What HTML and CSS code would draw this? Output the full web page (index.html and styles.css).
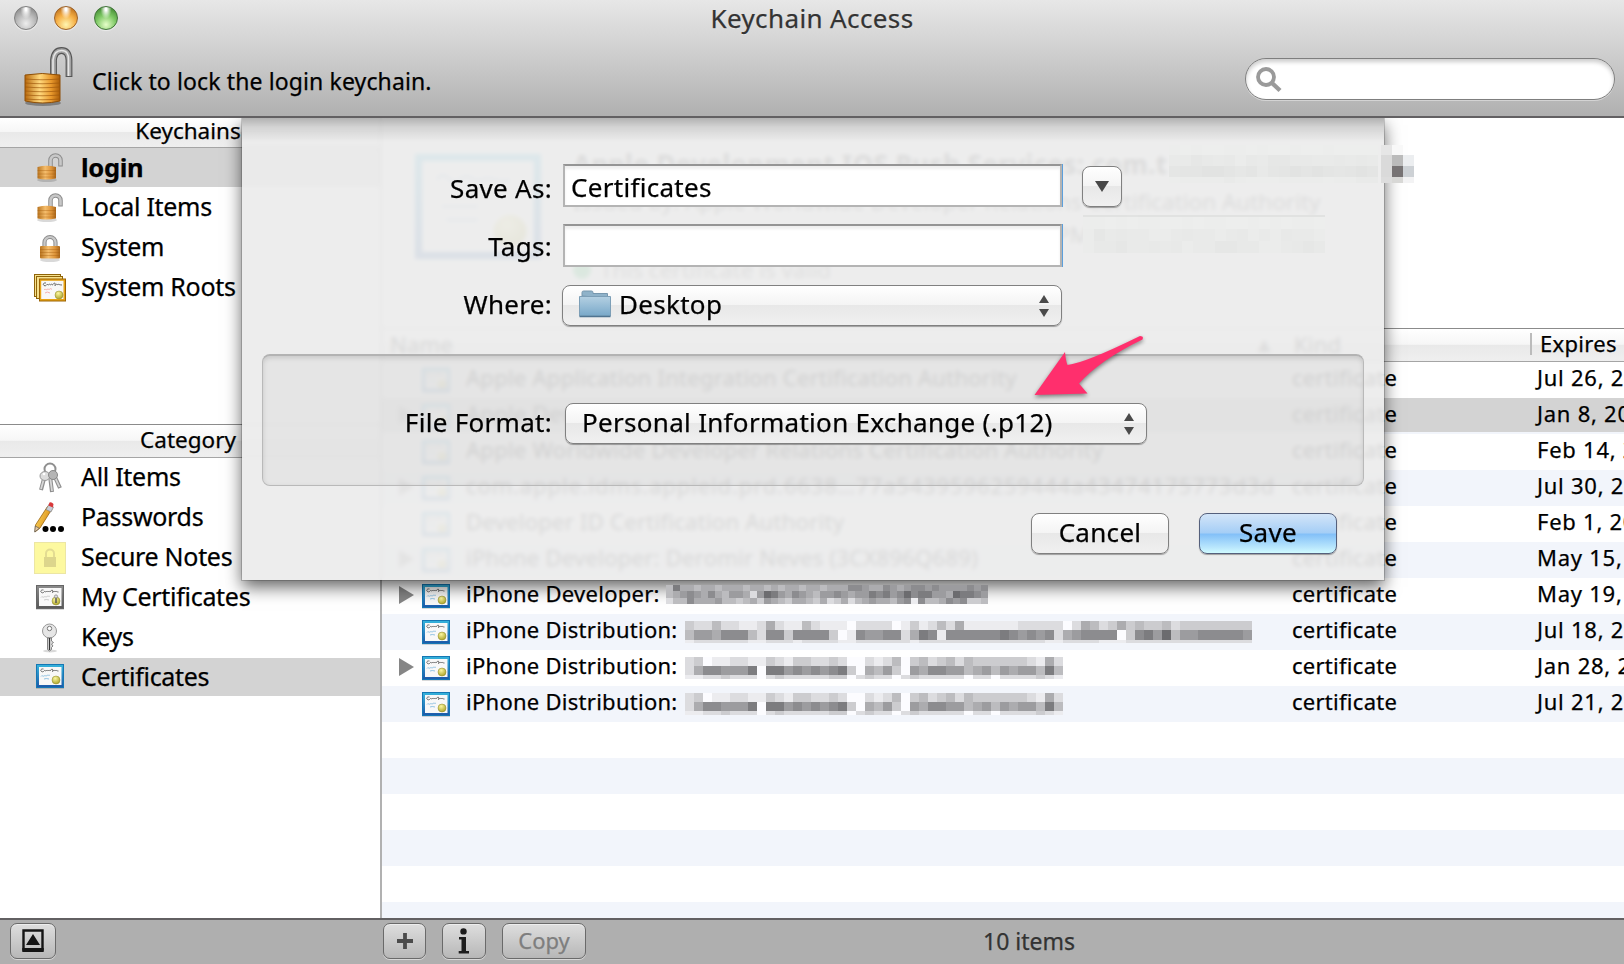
FILE: index.html
```html
<!DOCTYPE html>
<html lang="en">
<head>
<meta charset="utf-8">
<title>Keychain Access</title>
<link rel="stylesheet" href="styles.css">
</head>
<body>
<svg width="0" height="0" class="defs">
  <defs>
    <linearGradient id="blue" x1="0" y1="0" x2="0" y2="1"><stop offset="0" stop-color="#35b4dc"/><stop offset="1" stop-color="#1c58a8"/></linearGradient>
    <linearGradient id="gray" x1="0" y1="0" x2="0" y2="1"><stop offset="0" stop-color="#8c8c8c"/><stop offset="1" stop-color="#585858"/></linearGradient>
    <linearGradient id="brass" x1="0" y1="0" x2="1" y2="0"><stop offset="0" stop-color="#b8680c"/><stop offset=".42" stop-color="#ffd87c"/><stop offset=".75" stop-color="#e8982c"/><stop offset="1" stop-color="#aa5c08"/></linearGradient>
    <linearGradient id="brass2" x1="0" y1="0" x2="1" y2="0"><stop offset="0" stop-color="#b8741f"/><stop offset=".42" stop-color="#f5bd6c"/><stop offset=".75" stop-color="#dd943a"/><stop offset="1" stop-color="#a8651a"/></linearGradient>
    <linearGradient id="folder" x1="0" y1="0" x2="0" y2="1"><stop offset="0" stop-color="#b4d0e2"/><stop offset="1" stop-color="#78a8c9"/></linearGradient>
    <linearGradient id="pencil" x1="0" y1="0" x2="1" y2=".5"><stop offset="0" stop-color="#ffe06a"/><stop offset="1" stop-color="#d98a10"/></linearGradient>
    <radialGradient id="seal" cx=".4" cy=".3" r=".8"><stop offset="0" stop-color="#fbf7a0"/><stop offset="1" stop-color="#a39a1c"/></radialGradient>
    <symbol id="paper" viewBox="0 0 28 24">
      <rect x="3" y="3" width="22.500" height="18" fill="#f8f8f8"/>
      <path d="M7.500 5C5 4.500 4 6.500 5.500 7.500S8 7 8.500 6.500 9.500 7.500 10.500 6.500s1 1 2 0 1 1 2 0 1.500-2.500 2-1-.5 3 .5 1.500 1.500 0 2.500-.5 1 .5 3 .500" fill="none" stroke="#4a4a4a" stroke-width=".8"/>
    </symbol>
    <symbol id="cert" viewBox="0 0 28 26">
      <rect x="0" y="23" width="28" height="2" fill="#000" opacity=".15"/>
      <rect x=".5" y=".5" width="27" height="23" fill="url(#blue)" stroke="#1577b4"/>
      <use href="#paper" width="28" height="24"/>
      <path d="M5 12.500c1-2 2 .5 3-.5s2 .5 3-.5 2 .5 3-.5M8 15q2-1 5 0" fill="none" stroke="#86bce0" stroke-width=".9"/>
      <circle cx="20" cy="16" r="4" fill="url(#seal)" stroke="#8f8a2a" stroke-width=".5"/>
    </symbol>
    <symbol id="mycert" viewBox="0 0 28 26">
      <rect x="0" y="23" width="28" height="2" fill="#000" opacity=".15"/>
      <rect x=".5" y=".5" width="27" height="23" fill="url(#gray)" stroke="#666"/>
      <use href="#paper" width="28" height="24"/>
      <path d="M5 12.500c1-2 2 .5 3-.5s2 .5 3-.5 2 .5 3-.5M8 15q2-1 5 0" fill="none" stroke="#c4c4c4" stroke-width=".9"/>
      <circle cx="20" cy="16" r="4" fill="url(#seal)" stroke="#8f8a2a" stroke-width=".5"/>
      <path d="M20 12v6" stroke="#555" stroke-width="1.500"/><circle cx="20" cy="11.500" r="1.600" fill="#ddd" stroke="#888" stroke-width=".8"/>
    </symbol>
    <symbol id="roots" viewBox="0 0 32 28">
      <g stroke="#8f6408" fill="#f6e08c"><rect x=".5" y=".5" width="26" height="22"/><rect x="2.500" y="2.500" width="26" height="22"/></g>
      <rect x="5.500" y="5" width="26" height="22" fill="#e8a313" stroke="#9c6406"/>
      <rect x="7.200" y="6.800" width="22.300" height="18.200" fill="#f8f8f8"/>
      <path d="M12 9C9.500 8.500 8.500 10.500 10 11.500s2.500-.5 3-1 1 1 2 0 1 1 2 0 1 1 2 0 1.500-2.500 2-1-.5 3 .5 1.500 1.500 0 2.500-.5 1 .5 4 .5" fill="none" stroke="#444" stroke-width=".8"/>
      <path d="M10 16c1-2 2 .5 3-.5s2 .5 3-.5 1 .5 2 0M11 19q2-2 5 0" fill="none" stroke="#f2a6a6" stroke-width=".9"/>
      <circle cx="25" cy="21" r="4" fill="url(#seal)" stroke="#8f8a2a" stroke-width=".5"/>
    </symbol>
    <symbol id="lock-open" viewBox="0 0 28 30">
      <ellipse cx="11" cy="27" rx="10" ry="2" fill="#000" opacity=".15"/>
      <path d="M14.500 14V7.500a5 5 0 0 1 10 0V13.500" fill="none" stroke="#8c8c8c" stroke-width="4.500"/>
      <path d="M14.500 14V7.500a5 5 0 0 1 10 0V12.500" fill="none" stroke="#c8c8c8" stroke-width="2.600"/>
      <path d="M1.500 14q9-2.500 18.500 0v11.500q-10 2-18.500 0z" fill="url(#brass2)"/>
      <path d="M1.500 17.500h18.500M1.500 21h18.500M1.500 24h18.500" stroke="#a55c0c" stroke-width=".9" opacity=".4"/>
    </symbol>
    <symbol id="lock-shut" viewBox="0 0 28 30">
      <ellipse cx="14" cy="27" rx="10" ry="2" fill="#000" opacity=".15"/>
      <path d="M8.500 14V9.500a5.500 5.500 0 0 1 11 0V14" fill="none" stroke="#8c8c8c" stroke-width="4.200"/>
      <path d="M8.500 14V9.500a5.500 5.500 0 0 1 11 0V14" fill="none" stroke="#c8c8c8" stroke-width="2.200"/>
      <rect x="4" y="13" width="20" height="12.500" rx="1" fill="url(#brass2)"/>
      <path d="M4 16.500h20M4 19.500h20M4 22.500h20" stroke="#a55c0c" stroke-width=".9" opacity=".4"/>
    </symbol>
    <symbol id="updown" viewBox="0 0 10 22"><path d="M5 0l5 8H0zM0 14h10l-5 8z" fill="#4a4a4a"/></symbol>
  </defs>
</svg>
<div class="window">
  <header class="toolbar">
    <div class="lights"><i class="light gray"></i><i class="light amber"></i><i class="light green"></i></div>
    <h1 class="title">Keychain Access</h1>
    <div class="tools">
      <svg class="biglock" viewBox="0 0 50 62">
        <ellipse cx="19" cy="57" rx="18" ry="3" fill="#000" opacity=".3"/>
        <path d="M29.500 32V14q1-9.500 8-9.500t7.500 9.500v17" fill="none" stroke="#555" stroke-width="6.800"/>
        <path d="M29.500 32V14q1-9.500 8-9.500t7.500 9.500v16" fill="none" stroke="#a4a4a4" stroke-width="4.600"/>
        <path d="M29 32V14q1-9.500 8.500-9.500T44.500 14v16" fill="none" stroke="#e6e6e6" stroke-width="1.600"/>
        <path d="M1 29q17-3 35 0v26q-17 4-35 0z" fill="url(#brass)" stroke="#8d4f08"/>
        <path d="M1 33q17 1.500 35 0M1 37q17 1.500 35 0M1 41q17 1.500 35 0M1 45q17 1.500 35 0M1 49q17 1.500 35 0M1 53q17 1.500 35 0" fill="none" stroke="#9d560a" stroke-width="1.200" opacity=".65"/>
      </svg>
      <span class="hint">Click to lock the login keychain.</span>
      <div class="search"><svg viewBox="0 0 26 26"><circle cx="10" cy="10" r="8" fill="none" stroke="#9a9a9a" stroke-width="3.800"/><path d="M16 16l8 7.500" stroke="#9a9a9a" stroke-width="4.400"/></svg></div>
    </div>
  </header>

  <main class="main">
    <aside class="sidebar">
      <div class="bar first">Keychains</div>
      <ul class="list keychains">
        <li class="on"><svg class="lk"><use href="#lock-open"/></svg><b>login</b></li>
        <li><svg class="lk"><use href="#lock-open"/></svg><span>Local Items</span></li>
        <li><svg class="lk"><use href="#lock-shut"/></svg><span>System</span></li>
        <li><svg class="rt"><use href="#roots"/></svg><span>System Roots</span></li>
      </ul>
      <div class="bar">Category</div>
      <ul class="list">
        <li><svg class="sq" viewBox="0 0 32 32"><g fill="none" stroke="#8f8f8f"><circle cx="16" cy="7" r="5.500" stroke-width="2"/><path d="M11 13l-4 15M16 14l2 16M20 13l6 13" stroke-width="4"/></g><path d="M11 13l-4 14M16 14l2 15M20 13l5.500 12" stroke="#d6d6d6" stroke-width="1.800"/><ellipse cx="11" cy="14" rx="5" ry="4.500" fill="#dcdcdc" stroke="#999"/><ellipse cx="19" cy="13" rx="4.500" ry="4.500" fill="#b5b5b5" stroke="#888"/><circle cx="10" cy="12" r="1.300" fill="#fff"/></svg><span>All Items</span></li>
        <li><svg class="sq" viewBox="0 0 32 32"><path d="M13.500 4.500l4.500 2.500L6 26l-5 4 .5-7z" fill="url(#pencil)" stroke="#9a6410" stroke-width=".8"/><path d="M1.300 24l4 2.300L.7 30z" fill="#e8c9a0" stroke="#555" stroke-width=".7"/><path d="M12 7.500l5 2.500 2.500-5-4.600-2.500z" fill="#c9cdd6" stroke="#777" stroke-width=".6"/><path d="M14.300 3.500l4.600 2L19.500 2q-2-2.500-4-1.500z" fill="#d8383a"/><circle cx="11.500" cy="27" r="3" fill="#000"/><circle cx="19" cy="27" r="3" fill="#000"/><circle cx="27" cy="27" r="3" fill="#000"/></svg><span>Passwords</span></li>
        <li><svg class="sq" viewBox="0 0 32 32"><rect x=".5" y=".5" width="31" height="31" fill="#fdf9a0" stroke="#ece6a4"/><path d="M12 16v-4.500a4 4 0 0 1 8 0V16" fill="none" stroke="#e3dc92" stroke-width="2"/><rect x="10" y="15" width="12" height="10" fill="#ddd68c"/></svg><span>Secure Notes</span></li>
        <li><svg class="ct"><use href="#mycert"/></svg><span>My Certificates</span></li>
        <li><svg class="sq" viewBox="0 0 32 32"><ellipse cx="16" cy="29" rx="7" ry="1.500" fill="#000" opacity=".15"/><circle cx="15.500" cy="9" r="7" fill="#e6e6e6" stroke="#999"/><circle cx="15.500" cy="6.500" r="2.200" fill="#fff" stroke="#777"/><path d="M13.500 16h4v3l2 1.500-2 1.500 1.500 2-1.500 1.500v2L15.500 29l-2-1.500z" fill="#ddd" stroke="#777" stroke-width=".9"/><path d="M15.500 16v12" stroke="#333" stroke-width="1.200"/></svg><span>Keys</span></li>
        <li class="on"><svg class="ct"><use href="#cert"/></svg><span>Certificates</span></li>
      </ul>
    </aside>

    <section class="content">
      <div class="detail">
        <svg class="bigcert" viewBox="0 0 28 24" preserveAspectRatio="none"><rect x="1" y="1" width="26" height="22" fill="#fff" stroke="url(#blue)" stroke-width="1.600"/><path d="M5 6c2-3 3 2 5 0s3 1 5 0 3 1 6 0M6 12h8M7 15h7" stroke="#9bd" stroke-width=".6" fill="none"/><circle cx="21" cy="17.500" r="3.600" fill="url(#seal)"/></svg>
        <div class="facts">
          <b class="f1">Apple Development IOS Push Services: com.t</b>
          <span class="f2">Issued by: Apple Worldwide Developer Relations Certification Authority</span>
          <span class="f3">Expires: Wednesday, January 8, 2014 2:52:43 PM</span>
          <span class="f4"><i class="ok"></i>This certificate is valid</span>
        </div>
      </div>
      <div class="thead"><span class="c1">Name</span><span class="sort">▲</span><span class="c2">Kind</span><span class="c3">Expires</span></div>
      <div class="rows">
        <div class="row"><i class="tw"></i><svg class="ct"><use href="#cert"/></svg><span class="name">Apple Application Integration Certification Authority</span><span class="kind">certificate</span><span class="exp">Jul 26, 2019</span></div>
        <div class="row sel"><i class="tw tri"></i><svg class="ct"><use href="#cert"/></svg><span class="name">Apple Development IOS Push Services: com</span><span class="kind">certificate</span><span class="exp">Jan 8, 2014</span></div>
        <div class="row"><i class="tw"></i><svg class="ct"><use href="#cert"/></svg><span class="name">Apple Worldwide Developer Relations Certification Authority</span><span class="kind">certificate</span><span class="exp">Feb 14, 2016</span></div>
        <div class="row"><i class="tw tri"></i><svg class="ct"><use href="#cert"/></svg><span class="name long">com.apple.idms.appleid.prd.6638…77a5439596259444a43474175773d3d</span><span class="kind">certificate</span><span class="exp">Jul 30, 2014</span></div>
        <div class="row"><i class="tw"></i><svg class="ct"><use href="#cert"/></svg><span class="name">Developer ID Certification Authority</span><span class="kind">certificate</span><span class="exp">Feb 1, 2027</span></div>
        <div class="row"><i class="tw tri"></i><svg class="ct"><use href="#cert"/></svg><span class="name">iPhone Developer: Deromir Neves (3CX896Q689)</span><span class="kind">certificate</span><span class="exp">May 15, 2014</span></div>
        <div class="row"><i class="tw tri"></i><svg class="ct"><use href="#cert"/></svg><span class="name">iPhone Developer:</span><span class="kind">certificate</span><span class="exp">May 19, 2014</span></div>
        <div class="row"><i class="tw"></i><svg class="ct"><use href="#cert"/></svg><span class="name">iPhone Distribution:</span><span class="kind">certificate</span><span class="exp">Jul 18, 2014</span></div>
        <div class="row"><i class="tw tri"></i><svg class="ct"><use href="#cert"/></svg><span class="name">iPhone Distribution:</span><span class="kind">certificate</span><span class="exp">Jan 28, 2014</span></div>
        <div class="row"><i class="tw"></i><svg class="ct"><use href="#cert"/></svg><span class="name">iPhone Distribution:</span><span class="kind">certificate</span><span class="exp">Jul 21, 2014</span></div>
        <div class="row"></div><div class="row"></div><div class="row"></div><div class="row"></div><div class="row"></div><div class="row"></div>
      </div>
    </section>
  </main>

  <footer class="bottom">
    <span class="btn b0"><svg viewBox="0 0 22 24"><path d="M1.500 1.500h19v19h-19z" fill="none" stroke="#151515" stroke-width="2.400"/><path d="M.3 19h21.400v4H.3zM11 5l7 11H4z" fill="#151515"/></svg></span>
    <span class="btn b1"><svg viewBox="0 0 18 18"><path d="M9 1v16M1 9h16" stroke="#4b4b4b" stroke-width="3.800"/></svg></span>
    <span class="btn b2"><svg viewBox="0 0 12 26"><circle cx="5.500" cy="3.400" r="3.200" fill="#1c1c1c"/><path d="M1 9h7v14h3v2.600H.7V23h2.800V11.400H1z" fill="#1c1c1c"/></svg></span>
    <span class="btn b3">Copy</span>
    <span class="count">10 items</span>
  </footer>

  <div class="sheet">
    <div class="field save"><label>Save As:</label><div class="input">Certificates</div><span class="pop square"><svg viewBox="0 0 14 11"><path d="M0 0h14L7 11z" fill="#484848"/></svg></span></div>
    <div class="field"><label>Tags:</label><div class="input"></div></div>
    <div class="field where"><label>Where:</label><div class="pop select"><svg class="folder" viewBox="0 0 32 28"><path d="M3 6V2.500Q3 1 4.500 1h8Q14 1 14 2.500V3.500h14.500V8z" fill="#8fb2c9" stroke="#7797ae"/><path d="M.5 6.500h31V26H.5z" fill="url(#folder)" stroke="#7d9fb7"/><path d="M.5 26.500h31" stroke="#4f7491" stroke-width="1.500"/></svg><span>Desktop</span><svg class="ud"><use href="#updown"/></svg></div></div>
    <div class="inset"><label>File Format:</label><div class="pop format"><span>Personal Information Exchange (.p12)</span><svg class="ud"><use href="#updown"/></svg></div></div>
    <div class="actions"><span class="pop act">Cancel</span><span class="pop act default">Save</span></div>
  </div>

  <svg class="overlay" viewBox="0 0 1624 964">
    <g id="mosaic" shape-rendering="crispEdges"></g>
    <path class="arrow" d="M1034.500 395L1065 352Q1066 362 1067.500 365Q1085 363 1140 336Q1144 336 1142.500 339.500Q1100 360 1079 383.500L1087.500 393.500Z"/>
  </svg>
</div>
<script src="mosaic.js"></script>
</body>
</html>
```

FILE: mosaic.js
```js
// Redaction blocks. Each hex digit is the gray level of one cell.
const g = document.getElementById('mosaic');
function band(x, y, w, h, cells, color) {
  [...cells].forEach((c, i) => {
    const r = document.createElementNS('http://www.w3.org/2000/svg', 'rect');
    r.setAttribute('x', x + i * w);
    r.setAttribute('y', y);
    r.setAttribute('width', w);
    r.setAttribute('height', h);
    r.setAttribute('fill', color(parseInt(c, 16)));
    g.appendChild(r);
  });
}
const solid = v => `rgb(${v * 16 + 12},${v * 16 + 12},${v * 16 + 15})`;
const faint = v => `rgb(${222 + v * 1.4},${223 + v * 1.4},${222 + v * 1.4})`;

band(666, 585, 7, 6, 'b7aabaabaaabaababaabaabaaa889aa89a988989999898', solid);
band(666, 591, 7, 7, 'ba989a8ab99ad9679a89ab9989a9978798687799a67789', solid);
band(666, 598, 7, 6, 'dbb8aaa9bbcbac9abcaabcadcadba9aab98e8bba898ccb', solid);

band(685, 621, 9, 9, 'cddbddeedadeebdeeefddddfecedbdaeeeeeedddddfdabdcacbccbdcccccccc', solid);
band(685, 630, 9, 10, 'b99a888bd88c8888cfe8998 8da78e888888789898da98888fc8796b99888889'.replace(' ', '') , solid);
band(685, 640, 9, 3, 'eddddddeedddeddddeeddddddeddddddddddddddeeddddeeedddddddddddddd', solid);

for (const y of [657, 693]) {
  band(685, y, 9, 9, 'dcfeeddeecdeccddcdffdedbfcbdcbdbccccccdead', solid);
  band(685, y + 9, 9, 9, 'da889997f779898987cfab9cf9a8899ba9b9a99b7b', solid);
  band(685, y + 18, 9, 4, 'eeddcdddfdcdddddccfdcddfdcdddddfddfddddcde', solid);
}

band(1169, 145, 11, 10, 'ababbaababbabbabbbb', faint);
band(1169, 155, 11, 11, '8867879786677887878', faint);
band(1169, 166, 11, 11, '5443346475434345434', faint);
band(1169, 177, 11, 6, 'a999989aaa9999a9988', faint);
band(1083, 215, 11, 2, '2222322222222222222222', faint);
band(1083, 217, 11, 12, 'aababaabbabaabbababaab', faint);
band(1083, 229, 11, 12, '9687889987889879897889', faint);
band(1083, 241, 11, 12, '9776887879886677998767', faint);

const edge = [
  [1381, 145, 11, 10, '#e6e6e6'], [1392, 145, 11, 10, '#f8f8f8'],
  [1381, 155, 11, 22, '#dadada'], [1392, 155, 11, 11, '#bbbbbb'], [1403, 155, 11, 11, '#eceef0'],
  [1392, 166, 11, 11, '#777374'], [1403, 166, 11, 11, '#cdd1d5'],
  [1381, 177, 11, 6, '#dddddd'], [1392, 177, 11, 6, '#d8d8d6'], [1403, 177, 11, 6, '#f3f3f4']
];
edge.forEach(([x, y, w, h, c]) => band(x, y, w, h, '0', () => c));
```

FILE: styles.css
```css
* { box-sizing: border-box; }
body { margin: 0; width: 1624px; height: 964px; overflow: hidden; font-family: "Noto Sans", "Open Sans", sans-serif; color: #000; background: #fff; -webkit-text-stroke: .25px; }
.defs { position: absolute; }
ul { list-style: none; margin: 0; padding: 0; }
.window { position: relative; width: 1624px; height: 964px; display: flex; flex-direction: column; overflow: hidden; }

.toolbar { position: relative; z-index: 3; height: 118px; border-bottom: 2px solid #626062; background: linear-gradient(#e7e7e7, #cfcfcf 45%, #b0b0b0); }
.lights { position: absolute; left: 14px; top: 6px; display: flex; gap: 16px; }
.light { width: 24px; height: 24px; border-radius: 50%; box-shadow: 0 1px 1px #fff8; }
.gray { background: radial-gradient(ellipse at 50% 10%, #fff 5%, #fff0 35%), radial-gradient(circle at 50% 75%, #eee, #bcbcbc 45%, #777 100%); border: 1.5px solid #808080; }
.amber { background: radial-gradient(ellipse at 50% 10%, #fff 5%, #fff0 35%), radial-gradient(circle at 50% 80%, #fff5b0, #f5ae44 48%, #a85a10 100%); border: 1.5px solid #9c622a; }
.green { background: radial-gradient(ellipse at 50% 10%, #fff 5%, #fff0 35%), radial-gradient(circle at 50% 80%, #e6ffc9, #7cc763 48%, #2e7422 100%); border: 1.5px solid #41743a; }
.title { margin: 0; height: 38px; line-height: 37px; font-size: 26px; letter-spacing: .38px; font-weight: 400; text-align: center; color: #333; text-shadow: 0 1px #fff8; }
.tools { display: flex; align-items: flex-start; padding: 8px 9px 0 24px; }
.biglock { width: 50px; height: 62px; }
.hint { font-size: 23px; letter-spacing: .12px; line-height: 30px; margin: 20px 0 0 18px; }
.search { margin: 12px 0 0 auto; width: 370px; height: 42px; border: 1.5px solid #7e7e7e; border-radius: 21px; background: #fff; box-shadow: inset 0 3px 4px #0003, 0 1px #fff6; padding: 8px 10px; }
.search svg { width: 26px; height: 26px; display: block; }

.main { display: flex; height: 800px; }
.sidebar { width: 382px; border-right: 2px solid #b1b1b1; background: #fff; }
.bar { height: 34px; border-top: 1px solid #8b8b8b; border-bottom: 1px solid #a5a5a5; background: linear-gradient(#fff, #f6f6f6 48%, #e9e9e9 50%, #efefef); font-size: 22.5px; line-height: 29px; text-align: center; padding-right: 4px; }
.bar.first { height: 30px; border-top: 0; line-height: 25px; }
.list li { height: 40px; display: flex; align-items: center; padding-left: 34px; font-size: 25px; letter-spacing: -.3px; }
.list svg { flex: none; margin-right: 15px; }
.list span { padding-bottom: 4px; }
.list b { font-size: 25.5px; padding-bottom: 2px; }
.list li.on { background: #d3d3d3; height: 38px; margin-bottom: 2px; }
.list li.on span { padding-bottom: 2px; }
.keychains { height: 276px; }
.keychains li.on { height: 39px; margin-bottom: 1px; }
.list .sq { width: 32px; height: 32px; }
.list .ct { width: 28px; height: 26px; margin: 0 17px 0 2px; }
.list .rt { width: 32px; height: 28px; }
.list .lk { width: 28px; height: 30px; margin: 0 17px 0 2px; }

.content { flex: 1; display: flex; flex-direction: column; overflow: hidden; }
.detail { height: 210px; flex: none; padding: 35px 0 0 32px; display: flex; gap: 31px; }
.bigcert { width: 128px; height: 107px; flex: none; }
.facts { display: flex; flex-direction: column; white-space: nowrap; font-size: 22.5px; color: #333; }
.f1 { font-size: 26px; line-height: 23px; letter-spacing: .42px; color: #222; }
.f2 { line-height: 30px; margin-top: 11px; }
.f3 { line-height: 30px; margin-top: 3px; letter-spacing: .25px; }
.f4 { line-height: 30px; margin-top: 5px; font-size: 22.5px; color: #555; display: flex; align-items: center; gap: 9px; }
.ok { width: 18px; height: 18px; border-radius: 50%; background: #2b5; }
.thead { height: 34px; flex: none; border-top: 1px solid #8b8b8b; border-bottom: 1px solid #a5a5a5; background: linear-gradient(#fff, #f6f6f6 48%, #e9e9e9 50%, #efefef); display: flex; align-items: center; font-size: 22px; letter-spacing: .2px; padding: 0 0 2px 8px; }
.c1 { width: 868px; } .sort { width: 36px; font: 16px "DejaVu Sans"; color: #444; } .c2 { width: 236px; }
.thead .c3 { border-left: 2px solid #bbb; height: 22px; line-height: 20px; padding-left: 8px; letter-spacing: .3px; }
.rows { flex: none; }
.row { height: 36px; display: flex; align-items: center; font-size: 22px; letter-spacing: .27px; white-space: nowrap; }
.row:nth-child(even) { background: #f2f5fb; }
.row.sel { background: linear-gradient(#d3d3d3 34px, #f2f5fb 34px); }
.row span { padding-bottom: 7px; flex: none; }
.tw { margin: 0 0 2px 17px; width: 15px; height: 18px; flex: none; }
.tri { background: #868686; clip-path: polygon(0 0, 100% 50%, 0 100%); }
.row .ct { width: 28px; height: 26px; margin: 2px 16px 0 8px; flex: none; }
.name { width: 826px; }
.name.long { letter-spacing: .88px; }
.kind { width: 245px; }
.exp { letter-spacing: .75px; }

.bottom { position: relative; z-index: 3; height: 46px; border-top: 2px solid #626062; background: #afafaf; display: flex; align-items: flex-start; padding: 3px 0 0 10px; }
.btn { height: 36px; border: 1.5px solid #6a6a6a; border-radius: 7px; background: linear-gradient(#dedede, #b7b7b7); box-shadow: 0 1px #d8d8d8, inset 0 1px #eee; display: flex; align-items: center; justify-content: center; font-size: 22px; color: #7e7e7e; padding-bottom: 2px; }
.b0 { width: 46px; padding: 0; } .b0 svg { width: 22px; height: 24px; }
.b1 { width: 43px; margin-left: 327px; padding: 0; } .b1 svg { width: 18px; height: 18px; }
.b2 { width: 44px; margin-left: 16px; padding: 0; } .b2 svg { width: 12px; height: 26px; }
.b3 { width: 84px; margin-left: 16px; }
.count { font-size: 23px; line-height: 36px; margin-left: 397px; color: #333; }

.sheet { position: absolute; z-index: 2; left: 242px; top: 118px; width: 1142px; height: 462px; background: linear-gradient(#00000040, #0000001c 9px, #0000 24px), rgba(236, 236, 236, .92); backdrop-filter: blur(2px); box-shadow: 0 0 0 1px #0000002b, 0 7px 16px 0 #0000009c; clip-path: inset(0 -40px -40px -40px); padding: 46px 20px 0; letter-spacing: .3px; }
.field { display: flex; height: 43px; margin-bottom: 17px; align-items: center; font-size: 26px; }
.field label { width: 290px; text-align: right; margin-right: 11px; }
.save label { padding-top: 4px; }
.input { width: 499px; height: 43px; border: 2px solid #b4b4b4; border-top-color: #959595; background: #fff; box-shadow: 1px 0 #5b9fdc, inset 0 3px 3px #0001; line-height: 43px; padding-left: 6px; margin-right: 1px; }
.pop { border: 1.5px solid #808080; border-radius: 8px; background: linear-gradient(#fff, #f4f4f4 48%, #e8e8e8 50%, #f0f0f0); box-shadow: 0 1px 1px #0005; display: flex; align-items: center; }
.square { width: 40px; height: 41px; margin: 2px 0 0 19px; justify-content: center; }
.square svg { width: 14px; height: 11px; }
.where { height: 41px; margin: 18px 0 0; }
.where label, .select span, .format span { padding-bottom: 3px; }
.select { width: 500px; height: 41px; margin-left: -1px; padding: 0 12px 0 16px; }
.folder { width: 32px; height: 28px; margin: 0 8px 3px 0; }
.ud { width: 10px; height: 22px; margin-left: auto; }
.inset { margin-top: 28px; height: 132px; border: 1px solid #b9b9b9; border-top: 2px solid #b3b3b3; border-radius: 8px; background: #00000009; box-shadow: inset 0 2px 5px #0002; display: flex; align-items: center; font-size: 26px; padding-top: 6px; }
.inset label { width: 289px; text-align: right; margin-right: 13px; padding-bottom: 3px; }
.format { width: 582px; height: 41px; padding: 0 12px 0 16px; }
.actions { display: flex; justify-content: flex-end; gap: 30px; padding: 27px 27px 0 0; }
.act { width: 138px; height: 41px; justify-content: center; font-size: 26px; padding-bottom: 3px; }
.default { border-color: #55607c; background: linear-gradient(#d3e5f8, #a5cef6 48%, #83c0f8 52%, #b8e6fd 85%, #d0fbff); }

.overlay { position: absolute; z-index: 4; left: 0; top: 0; width: 1624px; height: 964px; pointer-events: none; }
.arrow { fill: #ff2f6d; filter: drop-shadow(0 2px 2px #0007); }
```
